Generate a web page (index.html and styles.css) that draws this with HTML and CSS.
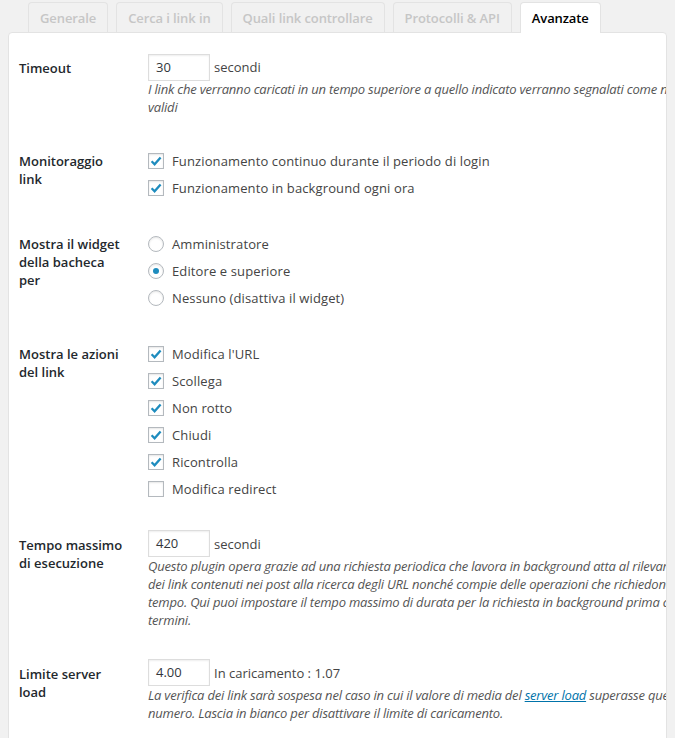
FILE: index.html
```html
<!DOCTYPE html>
<html lang="it">
<head>
<meta charset="utf-8">
<title>Impostazioni - Avanzate</title>
<link rel="stylesheet" href="styles.css">
</head>
<body>
<div class="wrap">
  <nav class="tabs">
    <a class="tab">Generale</a>
    <a class="tab">Cerca i link in</a>
    <a class="tab">Quali link controllare</a>
    <a class="tab">Protocolli &amp; API</a>
    <a class="tab active">Avanzate</a>
  </nav>
  <div class="panel">
    <table class="form-table">
      <tr>
        <th>Timeout</th>
        <td>
          <div class="field"><span class="input">30</span><span class="unit">secondi</span></div>
          <p class="description">I link che verranno caricati in un tempo superiore a quello indicato verranno segnalati come non<br>validi</p>
        </td>
      </tr>
      <tr>
        <th>Monitoraggio link</th>
        <td class="choices">
          <label class="option"><span class="cb checked"><svg viewBox="0 0 16 16"><path d="M3.6 8.2 L6.6 11.2 L12.6 4.4"/></svg></span>Funzionamento continuo durante il periodo di login</label>
          <label class="option"><span class="cb checked"><svg viewBox="0 0 16 16"><path d="M3.6 8.2 L6.6 11.2 L12.6 4.4"/></svg></span>Funzionamento in background ogni ora</label>
        </td>
      </tr>
      <tr>
        <th>Mostra il widget della bacheca per</th>
        <td class="choices">
          <label class="option"><span class="radio"></span>Amministratore</label>
          <label class="option"><span class="radio checked"></span>Editore e superiore</label>
          <label class="option"><span class="radio"></span>Nessuno (disattiva il widget)</label>
        </td>
      </tr>
      <tr>
        <th>Mostra le azioni del link</th>
        <td class="choices">
          <label class="option"><span class="cb checked"><svg viewBox="0 0 16 16"><path d="M3.6 8.2 L6.6 11.2 L12.6 4.4"/></svg></span>Modifica l'URL</label>
          <label class="option"><span class="cb checked"><svg viewBox="0 0 16 16"><path d="M3.6 8.2 L6.6 11.2 L12.6 4.4"/></svg></span>Scollega</label>
          <label class="option"><span class="cb checked"><svg viewBox="0 0 16 16"><path d="M3.6 8.2 L6.6 11.2 L12.6 4.4"/></svg></span>Non rotto</label>
          <label class="option"><span class="cb checked"><svg viewBox="0 0 16 16"><path d="M3.6 8.2 L6.6 11.2 L12.6 4.4"/></svg></span>Chiudi</label>
          <label class="option"><span class="cb checked"><svg viewBox="0 0 16 16"><path d="M3.6 8.2 L6.6 11.2 L12.6 4.4"/></svg></span>Ricontrolla</label>
          <label class="option"><span class="cb"></span>Modifica redirect</label>
        </td>
      </tr>
      <tr>
        <th>Tempo massimo di esecuzione</th>
        <td>
          <div class="field"><span class="input">420</span><span class="unit">secondi</span></div>
          <p class="description">Questo plugin opera grazie ad una richiesta periodica che lavora in background atta al rilevamento<br>dei link contenuti nei post alla ricerca degli URL nonché compie delle operazioni che richiedono<br>tempo. Qui puoi impostare il tempo massimo di durata per la richiesta in background prima che<br>termini.</p>
        </td>
      </tr>
      <tr>
        <th>Limite server load</th>
        <td>
          <div class="field"><span class="input">4.00</span><span class="unit">In caricamento : 1.07</span></div>
          <p class="description">La verifica dei link sarà sospesa nel caso in cui il valore di media del <a class="link">server load</a> superasse questo<br>numero. Lascia in bianco per disattivare il limite di caricamento.</p>
        </td>
      </tr>
    </table>
  </div>
</div>
</body>
</html>
```

FILE: styles.css
```css
html, body {
  background: #f1f1f1;
}
body {
  margin: 0 8px;
  font-family: "Segoe UI", "Open Sans", "Noto Sans", sans-serif;
  font-size: 13px;
  color: #444;
  overflow: hidden;
}
.wrap {
  padding-top: 2px;
}
.tabs {
  display: flex;
  gap: 8px;
  padding-left: 20px;
  position: relative;
  z-index: 1;
}
.tab {
  display: block;
  box-sizing: border-box;
  height: 30px;
  padding: 6px 11px 0;
  line-height: 19px;
  font-weight: 600;
  letter-spacing: -0.1px;
  color: #c6c6c6;
  background: #f1f1f1;
  border: 1px solid #e3e3e3;
  border-bottom: none;
  border-radius: 4px 4px 0 0;
  margin-bottom: -1px;
  white-space: nowrap;
}
.tab.active {
  background: #fff;
  color: #000;
  height: 31px;
}
.panel {
  background: #fff;
  border: 1px solid #e3e3e3;
  border-radius: 4px 4px 0 0;
  overflow: hidden;
  height: 720px;
}
.form-table {
  border-collapse: collapse;
  table-layout: fixed;
  width: 1000px;
  margin-top: 6px;
}
.form-table th {
  box-sizing: content-box;
  width: 107px;
  padding: 20px 22px 20px 10px;
  text-align: left;
  vertical-align: top;
  font-weight: 600;
  line-height: 18px;
  color: #23282d;
}
.form-table td {
  padding: 15px 10px 15px 0;
  vertical-align: top;
  line-height: 18px;
}
.form-table td.choices {
  padding-top: 16px;
  padding-bottom: 13px;
}
.field {
  display: flex;
  align-items: center;
  height: 26px;
  gap: 4px;
}
.input {
  box-sizing: border-box;
  width: 62px;
  height: 27px;
  padding: 0 7px;
  line-height: 25px;
  border: 1px solid #ddd;
  box-shadow: inset 0 1px 2px rgba(0,0,0,.07);
  color: #32373c;
  background: #fff;
}
.unit {
  color: #444;
}
.description {
  margin: 0;
  font-style: italic;
  color: #555;
  white-space: nowrap;
  line-height: 18.3px;
  letter-spacing: -0.2px;
}
.link {
  color: #0073aa;
  text-decoration: underline;
}
.option {
  display: flex;
  align-items: center;
  height: 27px;
  gap: 8px;
  white-space: nowrap;
  letter-spacing: 0.12px;
}
.cb, .radio {
  box-sizing: border-box;
  flex: none;
  width: 16px;
  height: 16px;
  border: 1px solid #b4b9be;
  background: #fff;
  box-shadow: inset 0 1px 2px rgba(0,0,0,.1);
  display: flex;
  align-items: center;
  justify-content: center;
}
.cb svg {
  width: 16px;
  height: 16px;
  margin: -1px;
}
.cb path {
  fill: none;
  stroke: #1e8cbe;
  stroke-width: 2.3;
}
.radio {
  border-radius: 50%;
}
.radio.checked::before {
  content: "";
  width: 6px;
  height: 6px;
  border-radius: 50%;
  background: #1e8cbe;
}
```
